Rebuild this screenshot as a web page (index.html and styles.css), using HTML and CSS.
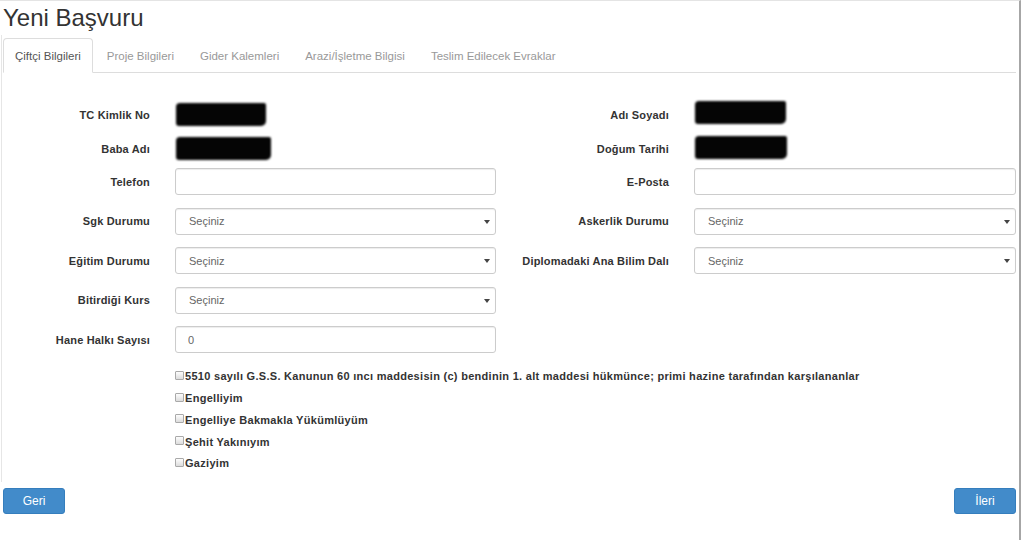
FILE: index.html
```html
<!doctype html>
<html lang="tr">
<head>
    <meta charset="UTF-8">
    <title>Yeni Başvuru</title>
    <link rel="stylesheet" href="styles.css">
</head>
<body>
<div class="page">
    <h1 class="title">Yeni Başvuru</h1>
    <div class="tab-area">
        <ul class="tabs">
            <li class="active"><a href="javascript:;">Çiftçi Bilgileri</a></li>
            <li><a href="javascript:;">Proje Bilgileri</a></li>
            <li><a href="javascript:;">Gider Kalemleri</a></li>
            <li><a href="javascript:;">Arazi/İşletme Bilgisi</a></li>
            <li><a href="javascript:;">Teslim Edilecek Evraklar</a></li>
        </ul>
        <form class="form">
            <div class="row static">
                <label>TC Kimlik No</label>
                <div><span class="redact r1"></span></div>
                <label>Adı Soyadı</label>
                <div><span class="redact r3"></span></div>
            </div>
            <div class="row static last">
                <label>Baba Adı</label>
                <div><span class="redact r2"></span></div>
                <label>Doğum Tarihi</label>
                <div><span class="redact r4"></span></div>
            </div>
            <div class="row">
                <label>Telefon</label>
                <input type="text" class="field">
                <label>E-Posta</label>
                <input type="text" class="field">
            </div>
            <div class="row">
                <label>Sgk Durumu</label>
                <div class="select"><select class="field"><option>Seçiniz</option></select></div>
                <label>Askerlik Durumu</label>
                <div class="select"><select class="field"><option>Seçiniz</option></select></div>
            </div>
            <div class="row">
                <label>Eğitim Durumu</label>
                <div class="select"><select class="field"><option>Seçiniz</option></select></div>
                <label>Diplomadaki Ana Bilim Dalı</label>
                <div class="select"><select class="field"><option>Seçiniz</option></select></div>
            </div>
            <div class="row">
                <label>Bitirdiği Kurs</label>
                <div class="select"><select class="field"><option>Seçiniz</option></select></div>
            </div>
            <div class="row">
                <label>Hane Halkı Sayısı</label>
                <input type="text" class="field" value="0">
            </div>
            <div class="checks">
                <label><input type="checkbox">5510 sayılı G.S.S. Kanunun 60 ıncı maddesisin (c) bendinin 1. alt maddesi hükmünce; primi hazine tarafından karşılananlar</label>
                <label><input type="checkbox">Engelliyim</label>
                <label><input type="checkbox">Engelliye Bakmakla Yükümlüyüm</label>
                <label><input type="checkbox">Şehit Yakınıyım</label>
                <label><input type="checkbox">Gaziyim</label>
            </div>
        </form>
    </div>
    <div class="pager">
        <a href="javascript:;" class="btn">Geri</a>
        <a href="javascript:;" class="btn">İleri</a>
    </div>
</div>
</body>
</html>
```

FILE: styles.css
```css
*{
    margin: 0;
    padding: 0;
    box-sizing: border-box;
}

body{
    background-color: #fff;
    font-family: "Liberation Sans", Arial, sans-serif;
    color: #333;
}

.page{
    width: 1021px;
    min-height: 540px;
    padding: 0 3px 0 1px;
    border-top: 1px solid #e4e4e4;
    border-right: 2px solid #a6a6a6;
}

.title{
    height: 34px;
    padding-left: 2px;
    font-size: 24px;
    line-height: 34px;
    font-weight: normal;
    color: #333;
}

.tab-area{
    border-left: 1px solid #e6e6e6;
    padding: 3px 0 8px 1px;
}

.tabs{
    list-style: none;
    display: flex;
    border-bottom: 1px solid #ddd;
}
.tabs li{
    margin-right: 2px;
    margin-bottom: -1px;
}
.tabs a{
    display: block;
    padding: 10px 11px 9px;
    line-height: 14px;
    font-size: 11.5px;
    color: #999;
    text-decoration: none;
    border: 1px solid transparent;
    border-radius: 4px 4px 0 0;
}
.tabs .active a{
    color: #555;
    background-color: #fff;
    border-color: #ddd #ddd transparent;
}

.form{
    padding-top: 30px;
}

.row{
    display: grid;
    grid-template-columns: 147px 321px 148px 322px;
    column-gap: 25px;
    align-items: center;
    height: 27px;
    margin-bottom: 12.5px;
}
.row.static{
    height: 22px;
    margin-bottom: 12px;
}
.row.static.last{
    margin-bottom: 9px;
}
.row label{
    text-align: right;
    font-size: 11px;
    font-weight: bold;
    letter-spacing: 0.18px;
    color: #333;
}

.redact{
    display: block;
    height: 23px;
    margin-left: 1px;
    background-color: #050505;
    border-radius: 4px 2px 5px 3px;
    filter: blur(1.2px);
}
.r1{ width: 90px; }
.r2{ width: 95px; }
.r3{ width: 91px; margin-top: -4px; }
.r4{ width: 92px; margin-top: -3px; }

.field{
    display: block;
    width: 100%;
    height: 27px;
    padding: 0 12px;
    font-family: "Liberation Sans", Arial, sans-serif;
    font-size: 11px;
    color: #666;
    background-color: #fff;
    border: 1px solid #ccc;
    border-radius: 3px;
    box-shadow: inset 0 1px 1px rgba(0,0,0,.075);
    outline: 0;
}
.select{
    position: relative;
}
.select .field{
    appearance: none;
    -webkit-appearance: none;
    padding-left: 13px;
}
.select:after{
    content: "";
    position: absolute;
    right: 6px;
    top: 12px;
    border-left: 3px solid transparent;
    border-right: 3px solid transparent;
    border-top: 4px solid #444;
}
.row:last-of-type{
    margin-bottom: 11px;
}

.checks{
    margin-left: 172px;
}
.checks label{
    display: flex;
    align-items: center;
    height: 21.75px;
    font-size: 11px;
    font-weight: bold;
    letter-spacing: 0.29px;
    color: #333;
}
.checks input{
    appearance: none;
    -webkit-appearance: none;
    width: 9px;
    height: 9px;
    margin-right: 1px;
    margin-top: -2px;
    border: 1px solid #a9a9a9;
    border-radius: 1px;
    background: linear-gradient(#fdfdfd, #dcdcdc);
}

.pager{
    display: flex;
    justify-content: space-between;
    margin-top: 6px;
    padding-left: 2px;
}
.btn{
    display: block;
    width: 62px;
    height: 26px;
    line-height: 24px;
    text-align: center;
    font-size: 12px;
    color: #fff;
    text-decoration: none;
    background-color: #428bca;
    border: 1px solid #357ebd;
    border-radius: 3px;
}
```
